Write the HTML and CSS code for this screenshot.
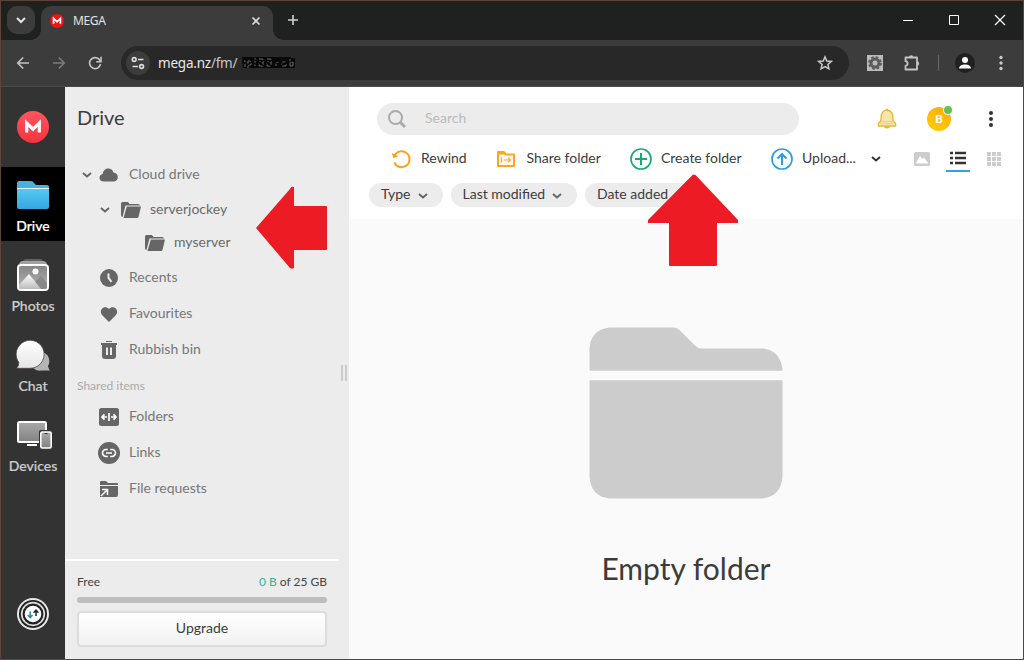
FILE: index.html
```
<!DOCTYPE html>
<html lang="en">
<head>
<meta charset="utf-8">
<title>MEGA</title>
<link rel="stylesheet" href="styles.css">
</head>
<body>
<div class="window">
  <header class="tabstrip">
    <div class="tab-search"><svg width="28" height="28"><path d="M10 12l4 4 4-4" fill="none" stroke="#e3e3e3" stroke-width="2"/></svg></div>
    <div class="tab">
      <svg class="favicon" width="14" height="14"><circle cx="7" cy="7" r="7" fill="#ee1414"/><path d="M3.6 9.8V4.4L7 7.7l3.4-3.3v5.4" fill="none" stroke="#fff" stroke-width="1.7"/></svg>
      <span class="tab-title">MEGA</span>
      <svg class="tab-close" width="10" height="10"><path d="M1.5 1.5l7 7M8.500 1.500l-7 7" stroke="#dedede" stroke-width="1.6"/></svg>
    </div>
    <svg class="new-tab" width="12" height="12"><path d="M6 1v10M1 6h10" stroke="#d2d2d2" stroke-width="1.6"/></svg>
    <div class="window-controls">
      <svg width="46" height="38"><path d="M17 19.500h10" stroke="#fff"/></svg>
      <svg width="46" height="38"><path d="M17.500 14.500h9v9h-9z" fill="none" stroke="#fff"/></svg>
      <svg width="45" height="38"><path d="M17 14l10 10M27 14l-10 10" stroke="#fff" stroke-width="1.2"/></svg>
    </div>
  </header>
  <div class="toolbar">
    <div class="nav">
      <svg width="14" height="14"><path d="M13 7H2M7.200 1.500L1.700 7l5.500 5.500" fill="none" stroke="#c4c4c4" stroke-width="1.600"/></svg>
      <svg width="14" height="14"><path d="M1 7h11M6.800 1.500L12.300 7l-5.500 5.500" fill="none" stroke="#7c7c7c" stroke-width="1.600"/></svg>
      <svg width="14" height="14"><path d="M12.500 8.200A5.500 5.500 0 1 1 10.800 3.000L12.500 4.800" fill="none" stroke="#c4c4c4" stroke-width="1.700"/><path d="M13 .8v5H8.200" fill="none" stroke="#c4c4c4" stroke-width="1.600"/></svg>
    </div>
    <div class="omnibox">
      <div class="site-info"><svg width="14" height="14" fill="none" stroke="#dedede" stroke-width="1.600"><circle cx="3.200" cy="3.500" r="1.900"/><path d="M7 3.500h5.500M1.500 10.500H7"/><circle cx="10.600" cy="10.500" r="1.900"/></svg></div>
      <span class="url">mega.nz<i>/fm/</i></span>
      <svg class="redaction" width="54" height="12"><path d="M0 0h48l1 1h4v10H1z" fill="#080808"/><path d="M2 4h1v6M6 11V4h3v4H6M13 1v8M17 2h4v3h-4v4h4V5M25 2h4v3h-4v4h4V5M34 9V5h3M40 5h4v4h-4zM48 2v7h3V5h-3" fill="none" stroke="#6c6c6c"/><path d="M0 6h4M8 3l7 5 7-5 7 6 6-5 8 3 9-4M4 9l9-6 9 6 8-6 9 6 8-6" fill="none" stroke="#080808" stroke-width="1.300"/></svg>
      <svg class="star" width="16" height="16"><path d="M8 1.900l1.800 4.100 4.500.4-3.400 3 1 4.400L8 11.500l-3.900 2.300 1-4.400-3.400-3 4.500-.4z" fill="none" stroke="#c8c8c8" stroke-width="1.500"/></svg>
    </div>
    <div class="extensions">
      <svg class="gear" width="16" height="16"><path d="M0 0h16v16H0z" fill="#bbb"/><circle cx="8" cy="8" r="5.500" fill="#5c5c5c"/><circle cx="8" cy="8" r="6" fill="none" stroke="#5c5c5c" stroke-width="1.800" stroke-dasharray="2.700 2.010"/><circle cx="8" cy="8" r="2.500" fill="#bbb"/></svg>
      <svg class="puzzle" width="18" height="18"><path d="M2.500 3.500h11.500v12H2.500v-3.700c2.800-.4 2.800-4.200 0-4.600z" fill="none" stroke="#c4c4c4" stroke-width="1.800" stroke-linejoin="round"/><path d="M6 3.500a2.200 2.200 0 0 1 4.400 0zM14 7.300a2.200 2.200 0 0 1 0 4.400z" fill="#c4c4c4"/></svg>
      <span class="divider"></span>
      <svg class="profile" width="20" height="20"><circle cx="10" cy="10" r="10" fill="#1f2120"/><circle cx="10" cy="7" r="3" fill="#fff"/><path d="M4 15.500c0-5.500 12-5.500 12 0z" fill="#fff"/></svg>
      <svg class="menu" width="4" height="16" fill="#c8c8c8"><circle cx="2" cy="2.500" r="1.700"/><circle cx="2" cy="8" r="1.700"/><circle cx="2" cy="13.500" r="1.700"/></svg>
    </div>
  </div>
  <div class="app">
    <nav class="rail">
      <div class="rail-logo"><svg width="32" height="32"><defs><linearGradient id="logo" x2="0" y2="1"><stop stop-color="#ff5560"/><stop offset="1" stop-color="#f5333f"/></linearGradient></defs><circle cx="16" cy="16" r="16" fill="url(#logo)"/><path d="M9.700 21.500V12l6.300 6.200 6.300-6.200v9.500" fill="none" stroke="#fff" stroke-width="3.200"/></svg></div>
      <div class="rail-item active">
        <svg width="40" height="34"><defs><linearGradient id="blue" x2="0" y2="1"><stop stop-color="#56c9f2"/><stop offset="1" stop-color="#34a7e1"/></linearGradient></defs><path d="M4 10V5q0-2 2-2h12q2 0 3 2l2 2h11q2 0 2 2v1z" fill="#48b2dd"/><path d="M4 11h32v18q0 2-2 2H6q-2 0-2-2z" fill="url(#blue)"/><path d="M4 10.500h32" stroke="#e4f5fb"/></svg>
        <span>Drive</span>
      </div>
      <div class="rail-item">
        <svg width="40" height="34"><defs><linearGradient id="photo" x2="0" y2="1"><stop stop-color="#848484"/><stop offset="1" stop-color="#b5b5b5"/></linearGradient><linearGradient id="mount" x2="0" y2="1"><stop stop-color="#fff"/><stop offset="1" stop-color="#bbb"/></linearGradient></defs><path d="M10 3q1-2 3-2h14q2 0 3 2z" fill="#616161"/><path d="M6 6q1-3 4-3h20q3 0 4 3z" fill="#a2a2a2"/><rect x="5" y="7" width="30" height="25" rx="3" fill="url(#photo)" stroke="#fff" stroke-width="2"/><path d="M21 25l7-7 6 7v4q0 2-2 2h-8z" fill="#888"/><path d="M6 27l10-11 12 15H8q-2 0-2-2z" fill="url(#mount)"/><circle cx="22.500" cy="13.500" r="3" fill="#fff"/></svg>
        <span>Photos</span>
      </div>
      <div class="rail-item">
        <svg width="40" height="34"><defs><linearGradient id="bubble" x2="0" y2="1"><stop stop-color="#fff"/><stop offset="1" stop-color="#e6e6e6"/></linearGradient></defs><path d="M35 28a9.500 9.500 0 1 0-7 4.600h9q-1.500-1.600-2-4.600z" fill="#b4b4b4"/><path d="M5.800 24.500A14 14 0 1 1 17 30.300H3.500q2.300-2 2.300-5.800z" fill="url(#bubble)" stroke="#444" stroke-width=".8"/></svg>
        <span>Chat</span>
      </div>
      <div class="rail-item">
        <svg width="40" height="34"><defs><linearGradient id="screen" x2="0" y2="1"><stop stop-color="#aaa"/><stop offset="1" stop-color="#828282"/></linearGradient></defs><rect x="5" y="4" width="28" height="20" rx="1.500" fill="url(#screen)" stroke="#fff" stroke-width="2"/><path d="M14 27h10" stroke="#fff" stroke-width="2"/><rect x="26" y="12" width="13" height="19" rx="2" fill="#333"/><rect x="27.800" y="14" width="10.400" height="16" rx="1.500" fill="url(#screen)" stroke="#fff" stroke-width="1.600"/><path d="M31.500 15.500h3" stroke="#333" stroke-width="1"/></svg>
        <span>Devices</span>
      </div>
      <svg class="transfers" width="32" height="32"><circle cx="16" cy="16" r="16" fill="#e8e8e8"/><circle cx="16" cy="16" r="14" fill="#222"/><circle cx="16" cy="16" r="11.300" fill="none" stroke="#ddd" stroke-width="1.700"/><circle cx="16" cy="16" r="8.300" fill="#fff"/><path d="M13.200 13.500v6M10.700 17l2.500 2.700 2.300-2.700" stroke="#2f86a5" fill="none" stroke-width="1.500"/><path d="M19 18v-6M16.600 14.800l2.400-2.700 2.400 2.700" stroke="#1d2730" fill="none" stroke-width="1.500"/></svg>
    </nav>
    <aside class="panel">
      <h1>Drive</h1>
      <div class="tree">
        <div class="row cloud"><svg class="chev" width="10" height="6"><path d="M1 1l4 3.500L9 1"/></svg><svg class="ico" width="22" height="22"><path d="M6 17.500c-6 0-5.500-7-1.300-7.500C5.500 3 14 2.800 15.500 8.500c5.500 0 5.800 9 .5 9z"/></svg><span>Cloud drive</span></div>
        <div class="row server"><svg class="chev" width="10" height="6"><path d="M1 1l4 3.500L9 1"/></svg><svg class="ico" width="22" height="22"><path d="M1 16V4.500Q1 3 2.500 3H8l1.500 2H18q2 0 2 1.500H5.500L2.500 18Q1 18 1 16zM6.800 7.500H21L18.500 18q-.3 1-1.500 1H3.500z"/></svg><span>serverjockey</span></div>
        <div class="row nested"><svg class="ico" width="22" height="22"><path d="M1 16V4.500Q1 3 2.500 3H8l1.500 2H18q2 0 2 1.500H5.500L2.500 18Q1 18 1 16zM6.800 7.500H21L18.500 18q-.3 1-1.500 1H3.500z"/></svg><span>myserver</span></div>
        <div class="row"><svg class="ico" width="22" height="22"><circle cx="11" cy="11" r="9"/><path d="M10.500 6.500v4.300l3 4" fill="none" stroke="#ececec" stroke-width="2"/></svg><span>Recents</span></div>
        <div class="row"><svg class="ico" width="22" height="22"><path d="M11 19L4.500 12.500C-.5 7 7 1 11 6c4-5 11.500 1 6.500 6.500z"/></svg><span>Favourites</span></div>
        <div class="row"><svg class="ico" width="22" height="22"><path d="M8 2h6v1H8zM3 4h16v2h-1v11q0 3-3 3H7q-3 0-3-3V6H3z"/><path d="M9 8.500v7.500M13 8.500v7.500" stroke="#ececec" stroke-width="2"/></svg><span>Rubbish bin</span></div>
      </div>
      <h2>Shared items</h2>
      <div class="row"><svg class="ico" width="22" height="22"><rect x="1" y="2" width="20" height="18" rx="2.500"/><path d="M11 7v8M9 11H4M6.500 8.300L4 11l2.500 2.700M13 11h5M15.500 8.300L18 11l-2.500 2.700" fill="none" stroke="#fff" stroke-width="1.700"/></svg><span>Folders</span></div>
      <div class="row"><svg class="ico" width="22" height="22"><circle cx="11" cy="11" r="11"/><path d="M9.800 14.500H8a3.500 3.500 0 0 1 0-7h1.800M12.200 7.500H14a3.500 3.500 0 0 1 0 7h-1.800M8 11h6" fill="none" stroke="#fff" stroke-width="1.700"/></svg><span>Links</span></div>
      <div class="row"><svg class="ico" width="22" height="22"><path d="M2 5V4q0-1 1-1h5l2 2h9q1 0 1 1v1H2zM2 8h18v9q0 2-2 2H2z"/><path d="M3 18l6-6M4 11.500h5.500V17" fill="none" stroke="#fff" stroke-width="1.500"/></svg><span>File requests</span></div>
      <div class="resize-grip"></div>
      <div class="storage">
        <div class="quota"><span>Free</span><span><b>0 B</b> of 25 GB</span></div>
        <div class="bar"></div>
        <button>Upgrade</button>
      </div>
    </aside>
    <main class="main">
      <div class="top">
        <div class="search"><svg width="19" height="19" fill="none" stroke="#aaa"><circle cx="7.500" cy="7.500" r="6.500" stroke-width="2"/><path d="M12 12l5 5" stroke-width="3"/></svg><span>Search</span></div>
        <svg class="bell" width="20" height="22"><path d="M7 18h6q0 2.500-3 2.500T7 18z" fill="#e8bb25"/><path d="M10 2.300C6 2.300 4.200 5.500 4.200 8.500c0 4-.4 4.500-2.300 6.300Q.8 16 1.500 18h17q.7-2-.4-3.200c-1.900-1.800-2.300-2.300-2.300-6.300 0-3-1.800-6.200-5.800-6.200z" fill="#f8e5ad" stroke="#eabb30" stroke-width="1.400"/><path d="M4 13.500h12M2 15.500h16" stroke="#f0d272"/><circle cx="10" cy="1.800" r="1.300" fill="#e8bb35"/></svg>
        <div class="avatar">B<i></i></div>
        <svg class="more" width="6" height="18" fill="#333"><circle cx="3" cy="3" r="2"/><circle cx="3" cy="9" r="2"/><circle cx="3" cy="15" r="2"/></svg>
      </div>
      <div class="actions">
        <div class="action rewind"><svg width="22" height="22"><path d="M4.500 7.500A8 8 0 1 1 4.300 14.500" fill="none" stroke="#ff9f1a" stroke-width="1.900"/><path d="M1.800 5l1.500 5 5-1.500z" fill="#ff9f1a"/></svg><span>Rewind</span></div>
        <div class="action share"><svg width="22" height="22"><path d="M3 4h6l2 2.500h8v11.500H3z" fill="#fff8eb" stroke="#ffa51f" stroke-width="2" stroke-linejoin="round"/><path d="M2.500 3.500H9l2 3H3z" fill="#ffa51f"/><path d="M6.500 9.500v5M9 12h6M13 9.700l2.300 2.300-2.300 2.300" fill="none" stroke="#ffa04a" stroke-width="1.200"/></svg><span>Share folder</span></div>
        <div class="action create"><svg width="22" height="22" fill="none" stroke="#19a974" stroke-width="2"><circle cx="11" cy="11" r="10" stroke-width="1.700"/><path d="M11 5v12M5 11h12"/></svg><span>Create folder</span></div>
        <div class="action upload"><svg width="22" height="22" fill="none" stroke="#2b9fde" stroke-width="2"><circle cx="11" cy="11" r="10" stroke-width="1.700"/><path d="M11 17V6M6.500 10.500L11 6l4.500 4.500"/></svg><span>Upload...</span><svg class="drop" width="10" height="6"><path d="M1 1l4 3.500L9 1" fill="none" stroke="#333" stroke-width="2"/></svg></div>
        <div class="views">
          <svg width="16" height="14"><rect width="16" height="14" rx="1.500" fill="#ccc"/><path d="M1.500 11.500L6 4l2.500 3L10 5.500l4.500 6z" fill="#fff"/></svg>
          <div class="view-on"><svg width="16" height="14"><path d="M0 2h3M5 2h11M0 7h3M5 7h11M0 12h3M5 12h11" stroke="#333" stroke-width="2.400"/></svg></div>
          <svg width="14" height="14" fill="#ccc"><path d="M0 0h4v4H0zM5 0h4v4H5zM10 0h4v4h-4zM0 5h4v4H0zM5 5h4v4H5zM10 5h4v4h-4zM0 10h4v4H0zM5 10h4v4H5zM10 10h4v4h-4z"/></svg>
        </div>
      </div>
      <div class="filters">
        <div class="chip type"><span>Type</span><svg width="10" height="6"><path d="M1 1l4 3.500L9 1"/></svg></div>
        <div class="chip modified"><span>Last modified</span><svg width="10" height="6"><path d="M1 1l4 3.500L9 1"/></svg></div>
        <div class="chip added"><span>Date added</span></div>
      </div>
      <section class="empty">
        <svg width="194" height="172" fill="#ccc"><path d="M.5 43V22Q1.500 3 20 .5h65q3 0 7 4l13 13q4 4 7 4h62q17 2 19.500 20.500v1q0 .8-1 .8h-191q-1 0-1-.8z"/><path d="M1.500 53.300h191q1 0 1 1V149q-1 20-20 22.500H20Q1.500 169 .5 149V54.300q0-1 1-1z"/></svg>
        <p>Empty folder</p>
      </section>
    </main>
  </div>
  <svg class="arrow arrow-left" width="72" height="84"><path d="M1 42L35 3q1-3 4-2v19h32q1 0 1 1v42q0 1-1 1H39v18q-2 1-4 0z" fill="#ed1c24"/></svg>
  <svg class="arrow arrow-up" width="92" height="94"><path d="M45.500 1q1-1 3 0L91 46v3H70v42q0 1-1 1H23q-1 0-1-1V49H1v-3z" fill="#ed1c24"/></svg>
</div>
</body>
</html>
```

FILE: styles.css
```
* { box-sizing: border-box; }
body { margin: 0; font-family: Lato, sans-serif; }
svg { display: block; flex: none; }
i { font-style: normal; }
.window { position: relative; width: 1024px; height: 660px; border: 1px solid #5d4438; background: #3c3c3c; overflow: hidden; display: flex; flex-direction: column; }
.tabstrip { flex: none; display: flex; height: 39px; background: #1f2120; padding-left: 6px; }
.tab-search { width: 28px; height: 28px; margin-top: 5px; border-radius: 10px; background: #3c3c3c; }
.tab { position: relative; display: flex; align-items: center; width: 232px; height: 34px; margin: 5px 0 0 6px; padding: 0 12px 5px 9px; border-radius: 10px 10px 0 0; background: #3c3c3c; color: #e3e3e3; font: 12px "Noto Sans", sans-serif; }
.tab::before, .tab::after { content: ""; position: absolute; bottom: 0; width: 10px; height: 10px; }
.tab::before { left: -10px; background: radial-gradient(circle at 0 0, transparent 9.5px, #3c3c3c 10px); }
.tab::after { right: -10px; background: radial-gradient(circle at 100% 0, transparent 9.5px, #3c3c3c 10px); }
.tab-title { margin-left: 9px; letter-spacing: -.35px; }
.tab-close { margin-left: auto; }
.new-tab { margin: 13px 0 0 14px; }
.window-controls { display: flex; margin-left: auto; }
.toolbar { flex: none; display: flex; align-items: center; height: 47px; background: #3c3c3c; border-bottom: 1px solid #4a4a4a; padding-left: 15px; }
.nav { display: flex; gap: 22px; width: 105px; }
.omnibox { display: flex; align-items: center; width: 728px; height: 34px; border-radius: 17px; background: #282828; padding: 0 16px 0 5px; }
.site-info { display: grid; place-items: center; width: 24px; height: 24px; border-radius: 50%; background: #3c3c3c; }
.url { width: 84px; margin-left: 8px; font: 13.5px "Noto Sans", sans-serif; color: #e8e8e8; white-space: nowrap; letter-spacing: -.22px; }
.url i { color: #c7c7c7; }
.star { margin-left: auto; }
.extensions { display: flex; align-items: center; }
.gear { margin-left: 18px; }
.puzzle { margin-left: 20px; }
.divider { width: 1px; height: 16px; margin-left: 17px; background: #666; }
.profile { margin-left: 16px; }
.menu { margin-left: 24px; }
.app { flex: 1; display: flex; min-height: 0; background: #fff; }
.rail { display: flex; flex-direction: column; align-items: center; width: 64px; background: #333; color: #ccc; }
.rail-logo { height: 80px; padding-top: 24px; }
.rail-item { display: flex; flex-direction: column; align-items: center; width: 64px; height: 74px; margin-bottom: 6px; padding-top: 11px; font-size: 14px; font-weight: 500; }
.rail-item span { margin-top: 5px; line-height: 18px; -webkit-text-stroke: .2px; }
.rail-item.active { background: #000; color: #fff; }
.transfers { margin: auto 0 29px; }
.panel { position: relative; display: flex; flex-direction: column; width: 284px; background: #ececec; color: #777; }
h1 { height: 70px; margin: 0; padding: 17px 12px 0; font-size: 20px; line-height: 26px; font-weight: 400; color: #3c3c3c; }
.row { display: flex; align-items: center; flex: none; height: 36px; padding-left: 33px; font-size: 14px; }
.row.cloud { height: 36px; padding-left: 17px; }
.row.server { height: 34px; padding-left: 35px; }
.row.nested { height: 32px; padding-left: 79px; }
.row.server, .row.nested { color: #6a6a6a; }
.tree .row.nested + .row { height: 37px; padding-top: 1px; }
.row span { margin-left: 9px; line-height: 20px; padding-bottom: 2px; }
.row.server span, .row.nested span { margin-left: 8px; }
.cloud .chev { margin-right: 6px; }
.server .chev { margin-right: 10px; }
.chev path, .chip path { fill: none; stroke: #666; stroke-width: 2; }
.ico { fill: #666; }
h2 { height: 31px; margin: 0; padding: 8px 12px 0; font-size: 12px; line-height: 20px; font-weight: 400; color: #aaa; }
.resize-grip { position: absolute; right: 2px; top: 278px; width: 6px; height: 16px; border: solid #ccc; border-width: 0 2px; }
.storage { width: 274px; height: 100px; margin-top: auto; border-top: 2px solid #fff; padding: 11px 12px 0; }
.quota { display: flex; justify-content: space-between; line-height: 20px; font-size: 12px; color: #444; }
.quota b { font-weight: 400; color: #2fb59a; }
.bar { height: 6px; margin-top: 5px; border-radius: 3px; background: #bdbdbd; }
.storage button { display: block; width: 250px; height: 36px; margin-top: 8px; border: 2px solid #dcdcdc; border-radius: 4px; background: linear-gradient(#fff, #f2f2f2); color: #3c3c3c; font: 14px Lato, sans-serif; padding: 0 0 3px; }
.main { flex: 1; min-width: 0; display: flex; flex-direction: column; color: #3c3c3c; }
.top { display: flex; align-items: center; height: 32px; margin: 16px 0 0 28px; }
.search { display: flex; align-items: center; width: 422px; height: 32px; border-radius: 16px; background: #ececec; padding-left: 11px; color: #bbb; font-size: 14px; }
.search span { margin-left: 18px; padding-bottom: 3px; }
.bell { margin-left: 78px; }
.avatar { position: relative; display: grid; place-items: center; width: 24px; height: 24px; margin-left: 30px; padding-bottom: 1px; border-radius: 50%; background: linear-gradient(25deg, #ffcf00, #ffaa12); color: #fff; font-size: 12px; font-weight: 700; }
.avatar i { position: absolute; top: -1px; right: -1px; width: 8px; height: 8px; border-radius: 50%; background: #61c34b; box-shadow: 0 0 0 1px #fff; }
.more { margin-left: 37px; }
.actions { display: flex; align-items: center; height: 48px; padding-left: 41px; padding-bottom: 1px; font-size: 14px; }
.action { display: flex; align-items: center; }
.action span { margin-left: 9px; padding-bottom: 2px; white-space: nowrap; }
.rewind { width: 105px; }
.share { width: 135px; }
.share span { margin-left: 9.5px; }
.create { width: 141px; }
.upload .drop { margin-left: 15px; }
.views { display: flex; align-items: center; margin-left: 33px; }
.view-on { width: 24px; height: 27px; margin: 0 17px 0 16px; border-bottom: 2px solid #31a3e5; padding: 6px 4px 0; }
.filters { display: flex; gap: 8px; padding-left: 20px; height: 36px; }
.chip { display: flex; justify-content: space-between; height: 24px; border-radius: 12px; background: #ececec; padding: 0 15px 0 12px; font-size: 14px; line-height: 20px; align-items: center; }
.chip span { padding-bottom: 2px; }
.type { width: 74px; }
.modified { width: 126px; padding-left: 11.5px; }
.added { width: 125px; }
.chip svg { margin-top: 1px; }
.empty { flex: 1; display: flex; flex-direction: column; align-items: center; background: #fafafa; padding-top: 108px; }
.empty p { margin: 51px 0 0; font-size: 30px; line-height: 36px; }
.arrow { position: absolute; }
.arrow-left { left: 254px; top: 185px; }
.arrow-up { left: 646px; top: 173px; }
```
